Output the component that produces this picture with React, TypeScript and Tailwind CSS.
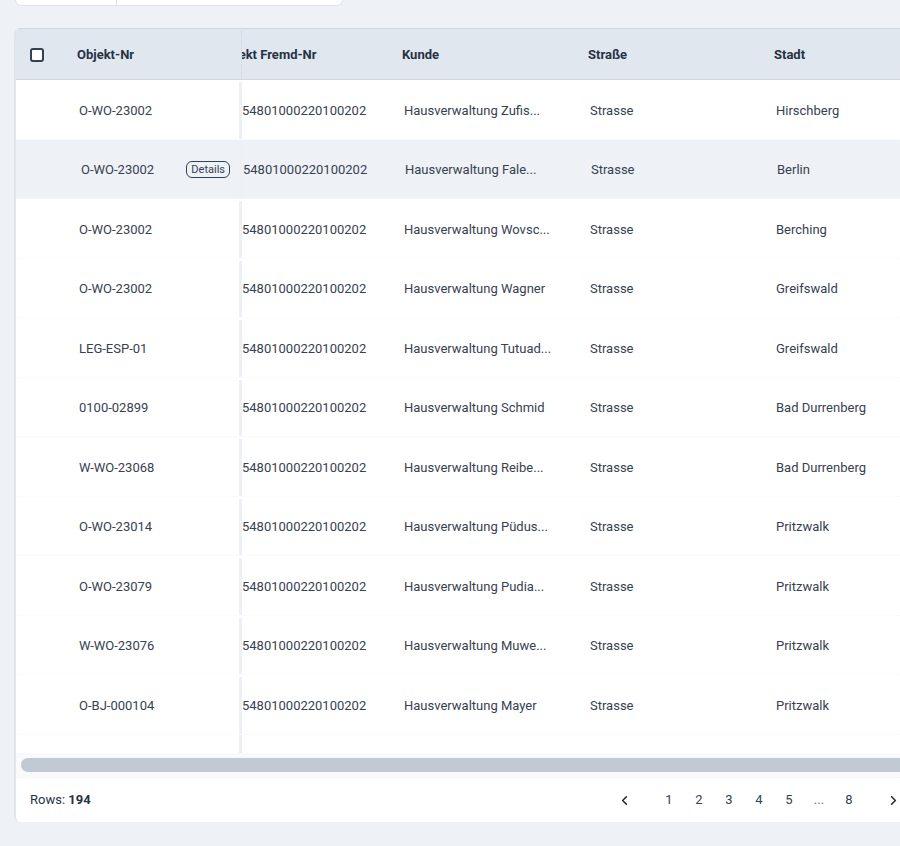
import { ChevronLeft, ChevronRight } from "lucide-react";

type Row = { nr: string; kunde: string; stadt: string };

const rows: Row[] = [
  { nr: "O-WO-23002", kunde: "Hausverwaltung Zufis...", stadt: "Hirschberg" },
  { nr: "O-WO-23002", kunde: "Hausverwaltung Fale...", stadt: "Berlin" },
  { nr: "O-WO-23002", kunde: "Hausverwaltung Wovsc...", stadt: "Berching" },
  { nr: "O-WO-23002", kunde: "Hausverwaltung Wagner", stadt: "Greifswald" },
  { nr: "LEG-ESP-01", kunde: "Hausverwaltung Tutuad...", stadt: "Greifswald" },
  { nr: "0100-02899", kunde: "Hausverwaltung Schmid", stadt: "Bad Durrenberg" },
  { nr: "W-WO-23068", kunde: "Hausverwaltung Reibe...", stadt: "Bad Durrenberg" },
  { nr: "O-WO-23014", kunde: "Hausverwaltung Püdus...", stadt: "Pritzwalk" },
  { nr: "O-WO-23079", kunde: "Hausverwaltung Pudia...", stadt: "Pritzwalk" },
  { nr: "W-WO-23076", kunde: "Hausverwaltung Muwe...", stadt: "Pritzwalk" },
  { nr: "O-BJ-000104", kunde: "Hausverwaltung Mayer", stadt: "Pritzwalk" },
];

const pages = ["1", "2", "3", "4", "5", "...", "8"];

export default function App() {
  return (
    <div className="w-[900px] h-[846px] overflow-hidden bg-[#eef1f6] font-['Roboto','Liberation_Sans',sans-serif] text-[13px] text-[#374151]">
      {/* filter bar, cut off at top */}
      <div className="ml-[15px] w-[328px] h-[6px] flex bg-white border border-t-0 border-[#dde3ea] rounded-b-md">
        <div className="w-[101px] border-r border-[#dde3ea]" />
      </div>

      <div className="mt-[22px] ml-[14px] w-[890px] bg-white border-l-2 border-[#e1e6ed] rounded-tl-md rounded-bl-md overflow-hidden">
        {/* header */}
        <div className="flex h-[52px] pt-[2px] bg-[#e1e7ef] border-t border-b border-[#cfd7e2] font-bold text-[#273244]">
          <div className="w-[226px] shrink-0 flex items-center pl-[14px] border-r border-dotted border-[#cbd3de]">
            <span className="w-[14px] h-[14px] rounded-[3px] border-2 border-[#334155] bg-white" />
            <span className="ml-[33px]">Objekt-Nr</span>
          </div>
          <div className="flex-1 flex items-center overflow-hidden">
            <div className="w-[160px] shrink-0 overflow-hidden whitespace-nowrap">
              <span className="inline-block -ml-[23px]">Objekt Fremd-Nr</span>
            </div>
            <div className="w-[186px] shrink-0">Kunde</div>
            <div className="w-[186px] shrink-0">Straße</div>
            <div className="w-[200px] shrink-0">Stadt</div>
          </div>
        </div>

        {/* body */}
        <div className="h-[673px] overflow-hidden">
          {rows.map((r, i) => {
            const hover = i === 1;
            return (
              <div
                key={i}
                className={`flex h-[59.5px] pt-[2px] border-b border-dotted border-[#f5f7f9] ${hover ? "bg-[#eef1f6]" : "bg-white"}`}
              >
                <div
                  className={`w-[226px] shrink-0 flex items-center justify-between border-r-[3px] border-[#edf0f4] ${hover ? "bg-[#eef1f6] pl-[65px] pr-[9px]" : "bg-white pl-[63px]"}`}
                >
                  <span>{r.nr}</span>
                  {hover && (
                    <span className="h-[17px] px-[4px] flex items-center rounded-md border border-[#334155] text-[11px] leading-none text-[#334155]">
                      Details
                    </span>
                  )}
                </div>
                <div className={`flex-1 flex items-center overflow-hidden whitespace-nowrap ${hover ? "pl-[1px]" : ""}`}>
                  <div className="w-[160px] shrink-0">54801000220100202</div>
                  <div className="w-[186px] shrink-0 pl-[2px]">{r.kunde}</div>
                  <div className="w-[186px] shrink-0 pl-[2px]">Strasse</div>
                  <div className="w-[200px] shrink-0 pl-[2px]">{r.stadt}</div>
                </div>
              </div>
            );
          })}
          <div className="flex h-[59.5px] bg-white">
            <div className="w-[226px] shrink-0 bg-white border-r-[3px] border-[#edf0f4]" />
          </div>
        </div>

        {/* horizontal scrollbar */}
        <div className="h-[25px] bg-[#f8fafc] flex items-center pl-[5px] border-b border-dotted border-[#f2f4f7]">
          <div className="w-full h-[14px] rounded-l-full bg-[#c0c9d4]" />
        </div>

        {/* footer */}
        <div className="h-[44px] flex items-center pl-[14px] pr-[1px] text-[#273244]">
          <span>
            Rows: <span className="font-bold">194</span>
          </span>
          <div className="ml-auto flex items-center">
            <button className="w-[30px] h-[30px] flex items-center justify-center text-[#1e293b]">
              <ChevronLeft size={15} strokeWidth={2.5} />
            </button>
            <div className="ml-[15px] flex items-center">
              {pages.map((p, i) => (
                <span key={i} className={`w-[30px] h-[30px] flex items-center justify-center ${p === "..." ? "text-[#6b7280]" : "text-[#334155]"}`}>
                  {p}
                </span>
              ))}
            </div>
            <button className="ml-[19px] w-[20px] h-[30px] flex items-center justify-center text-[#1e293b]">
              <ChevronRight size={15} strokeWidth={2.5} />
            </button>
          </div>
        </div>
      </div>
    </div>
  );
}
